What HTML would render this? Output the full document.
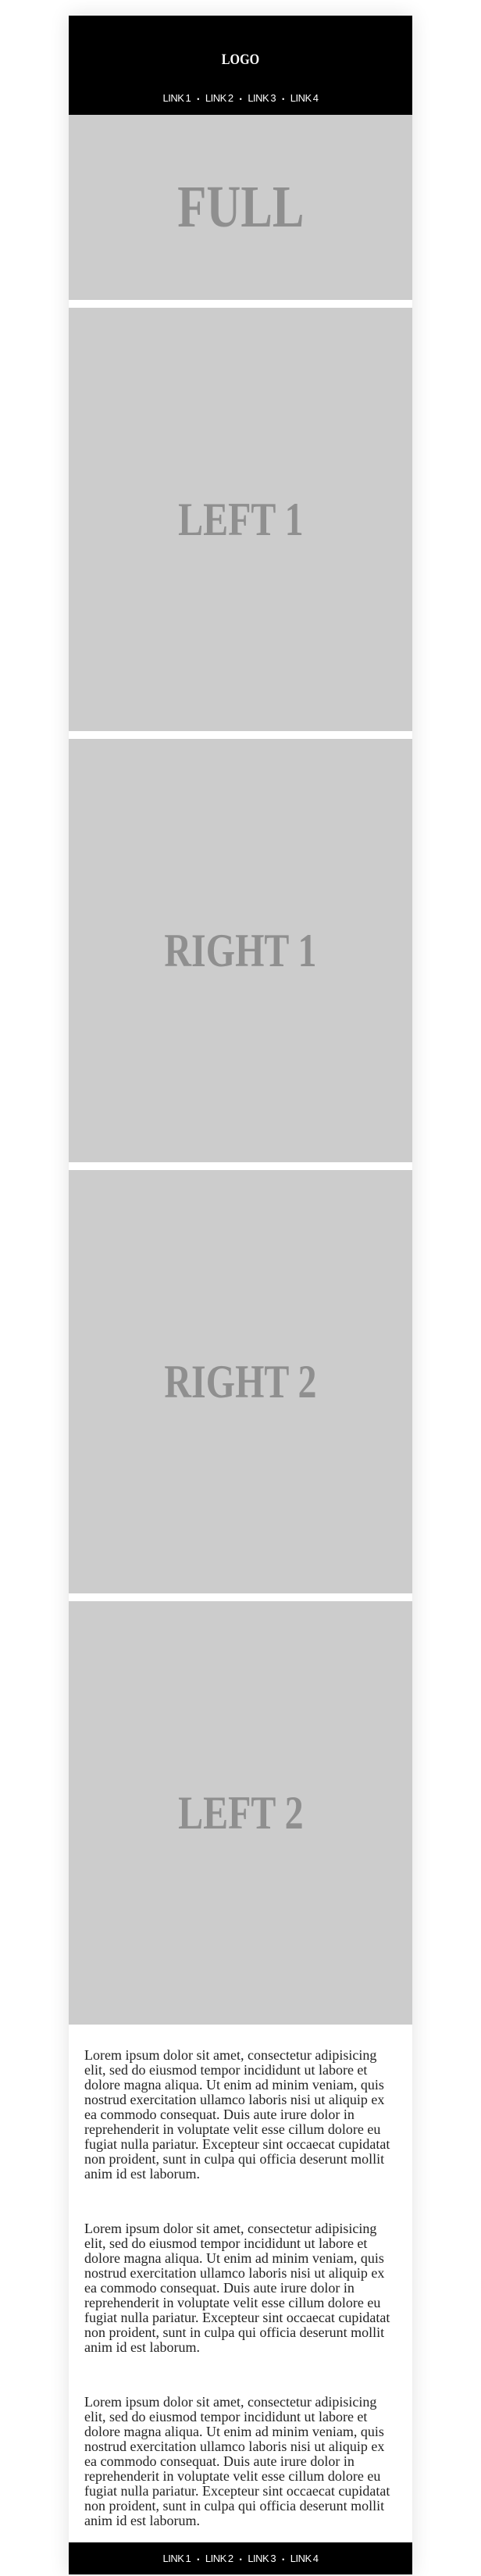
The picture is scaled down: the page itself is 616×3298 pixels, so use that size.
<!DOCTYPE html>
<html><head><meta charset="utf-8"><style>
body{margin:0;background:#fff;width:616px;height:3296px;overflow:hidden;}
.c{position:absolute;left:88px;top:20px;width:440px;box-shadow:0 0 24px rgba(0,0,0,.12);background:#fff;}
.hd{background:#000;height:127px;position:relative;color:#fff;text-align:center;}
.logo{position:absolute;top:46px;left:0;right:0;font:bold 19px "Liberation Serif",serif;transform:scaleX(.85);}
.nav{font:13px/41px "Liberation Sans",sans-serif;letter-spacing:-.5px;word-spacing:-1px;}
.nav span{margin:0 8px;font-size:9px;}
.hd .nav{position:absolute;top:96px;left:0;right:0;line-height:20px;}
.ph{background:#ccc;display:flex;align-items:center;justify-content:center;color:#8f8f8f;font:bold 60px "Liberation Serif",serif;}
.ph b{display:inline-block;transform:scaleX(.8);}
.gap{height:10px;background:#fff;}
.tx{padding:30px 20px 0 20px;}
.tx p{margin:0 0 51px;font:18px/19px "Liberation Serif",serif;color:#222;}
.ft{background:#000;color:#fff;height:41px;text-align:center;position:absolute;top:3235px;left:0;right:0;}
</style></head><body>
<div class="c" style="height:3276px">
<div class="hd"><div class="logo">LOGO</div><div class="nav">LINK 1<span>•</span>LINK 2<span>•</span>LINK 3<span>•</span>LINK 4</div></div>
<div class="ph" style="height:237px;font-size:76px"><b>FULL</b></div>
<div class="gap"></div>
<div class="ph" style="height:542px"><b>LEFT 1</b></div>
<div class="gap"></div>
<div class="ph" style="height:542px"><b>RIGHT 1</b></div>
<div class="gap"></div>
<div class="ph" style="height:542px"><b>RIGHT 2</b></div>
<div class="gap"></div>
<div class="ph" style="height:542px"><b>LEFT 2</b></div>
<div class="tx">
<p>Lorem ipsum dolor sit amet, consectetur adipisicing elit, sed do eiusmod tempor incididunt ut labore et dolore magna aliqua. Ut enim ad minim veniam, quis nostrud exercitation ullamco laboris nisi ut aliquip ex ea commodo consequat. Duis aute irure dolor in reprehenderit in voluptate velit esse cillum dolore eu fugiat nulla pariatur. Excepteur sint occaecat cupidatat non proident, sunt in culpa qui officia deserunt mollit anim id est laborum.</p>
<p>Lorem ipsum dolor sit amet, consectetur adipisicing elit, sed do eiusmod tempor incididunt ut labore et dolore magna aliqua. Ut enim ad minim veniam, quis nostrud exercitation ullamco laboris nisi ut aliquip ex ea commodo consequat. Duis aute irure dolor in reprehenderit in voluptate velit esse cillum dolore eu fugiat nulla pariatur. Excepteur sint occaecat cupidatat non proident, sunt in culpa qui officia deserunt mollit anim id est laborum.</p>
<p>Lorem ipsum dolor sit amet, consectetur adipisicing elit, sed do eiusmod tempor incididunt ut labore et dolore magna aliqua. Ut enim ad minim veniam, quis nostrud exercitation ullamco laboris nisi ut aliquip ex ea commodo consequat. Duis aute irure dolor in reprehenderit in voluptate velit esse cillum dolore eu fugiat nulla pariatur. Excepteur sint occaecat cupidatat non proident, sunt in culpa qui officia deserunt mollit anim id est laborum.</p>
</div>
<div class="ft"><div class="nav">LINK 1<span>•</span>LINK 2<span>•</span>LINK 3<span>•</span>LINK 4</div></div>
</div>
</body></html>
